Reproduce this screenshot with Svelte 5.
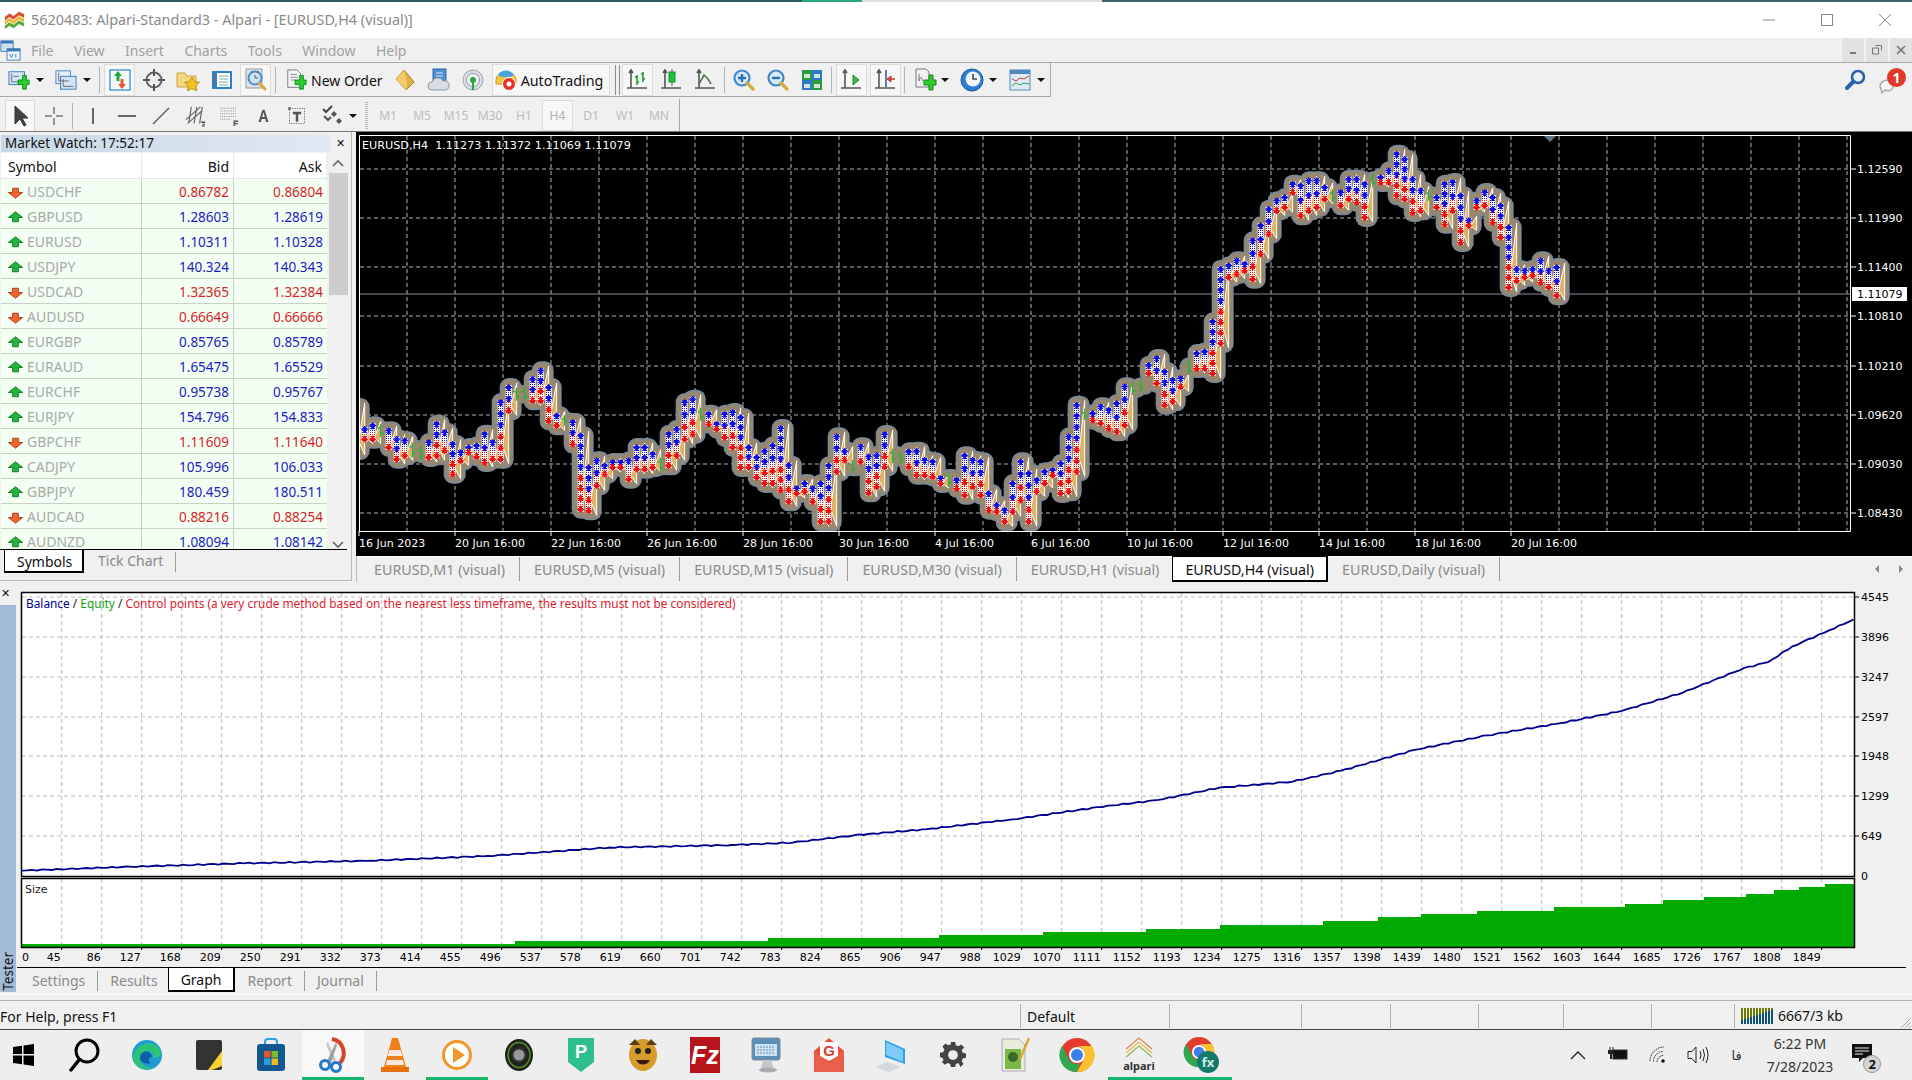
<script>
  // chart traces, read off the reference: [top, bottom] per bar, in crop units
  const seg1 = [[170,215],[160,215],[175,190],[175,240],[200,275],[205,265],[230,250],[240,258],[210,270],[155,265],[180,250],[215,320],[240,280],[225,255],[220,268],[185,285],[210,275],[90,275],[45,130],[65,80],[65,80],[20,100],[-5,100],[45,160],[130,175],[148,155],[150,230],[190,425],[285,430],[265,355],[280,320],[270,300],[270,300],[265,335],[225,305],[225,305],[245,300],[275,295],[185,295],[170,265],[90,215],[80,200],[125,140],[125,170],[155,185],[125,210],[120,240],[135,300],[225,300],[255,330]];
  const seg2 = [[578,690],[562,690],[510,710],[620,745],[690,720],[675,715],[690,745],[675,805],[622,805],[535,655],[578,620],[625,640],[565,625],[595,718],[590,700],[528,640],[590,610],[600,612],[580,640],[578,665],[605,665],[610,670],[660,690],[660,680],[665,705],[592,725],[605,700],[610,725],[705,770],[740,775],[755,805],[675,775],[610,740],[645,805],[665,715],[640,690],[635,665],[615,720],[535,715],[440,655],[470,480],[465,500],[445,510],[455,525],[435,535],[385,515],[390,405],[385,395],[320,360],[300,390],[340,455],[365,445],[360,400],[325,345],[285,345],[280,345],[190,360]];
  const seg3 = [[410,648],[400,450],[385,440],[395,430],[325,455],[280,380],[230,320],[205,250],[195,240],[155,195],[160,265],[145,250],[145,240],[165,215],[190,205],[180,235],[140,215],[140,225],[155,270],[145,160],[135,165],[115,165],[65,205],[80,215],[140,255],[175,250],[190,200],[195,240],[155,290],[150,250],[190,345],[265,295],[205,240],[180,235],[195,285],[220,330],[285,480],[410,460],[415,450],[410,445],[385,465],[415,480],[405,505]];

  const raw = [
    [356.7, 405, 453],
    ...seg1.map((b, i) => [364.67 + 8 * i, 370 + b[0] / 3, 370 + b[1] / 3]),
    ...seg2.map((b, i) => [764.67 + 8 * i, 256 + b[0] / 3, 256 + b[1] / 3]),
    ...seg3.map((b, i) => [1220.67 + 8 * i, 130 + b[0] / 3, 130 + b[1] / 3])
  ];
  const bars = raw.map(([x, t, b]) => {
    const h = b - t;
    const ups = [];
    const downs = [];
    if (h > 8) {
      const n = Math.max(2, Math.round(h / 10));
      for (let k = 0; k < n; k++) {
        const y = t + 3 + (k * (h - 6)) / Math.max(1, n - 1);
        if (k < n * 0.5) ups.push(y);
        else downs.push(y);
      }
    }
    return { x, t, b, h, ups, downs };
  });

  const upArrow = (x, y) => `${x},${y - 4} ${x + 4},${y} ${x + 1.5},${y} ${x + 1.5},${y + 3} ${x - 1.5},${y + 3} ${x - 1.5},${y} ${x - 4},${y}`;
  const downArrow = (x, y) => `${x},${y + 4} ${x + 4},${y} ${x + 1.5},${y} ${x + 1.5},${y - 3} ${x - 1.5},${y - 3} ${x - 1.5},${y} ${x - 4},${y}`;

  const gridX = Array.from({ length: 31 }, (_, i) => 407 + 48 * i);
  const prices = [['1.12590', 169], ['1.11990', 218], ['1.11400', 267], ['1.10810', 316], ['1.10210', 366], ['1.09620', 415], ['1.09030', 464], ['1.08430', 513]];
  const times = [['16 Jun 2023', 359], ['20 Jun 16:00', 455], ['22 Jun 16:00', 551], ['26 Jun 16:00', 647], ['28 Jun 16:00', 743], ['30 Jun 16:00', 839], ['4 Jul 16:00', 935], ['6 Jul 16:00', 1031], ['10 Jul 16:00', 1127], ['12 Jul 16:00', 1223], ['14 Jul 16:00', 1319], ['18 Jul 16:00', 1415], ['20 Jul 16:00', 1511]];

  // tester graph
  const eqPts = [[18,714],[100,711],[200,708],[300,706],[400,702],[500,695],[600,693],[650,691],[700,685],[760,680],[830,672],[900,662],[950,656],[1000,646],[1060,641],[1100,632],[1160,615],[1220,603],[1280,593],[1330,583],[1380,568],[1430,548],[1450,543],[1470,530],[1500,517],[1520,508]];
  let equity = '';
  eqPts.forEach(([x, y], i) => {
    const fx = x * 1.2194;
    const fy = y * 1.2194;
    if (i === 0) {
      equity = `M${fx} ${fy}`;
      return;
    }
    const px = eqPts[i - 1][0] * 1.2194;
    const py = eqPts[i - 1][1] * 1.2194;
    const n = Math.round((fx - px) / 5);
    for (let k = 1; k <= n; k++) {
      const wob = k === n ? 0 : Math.sin(k * 2.3 + i) * 0.6;
      equity += ` L${(px + ((fx - px) * k) / n).toFixed(1)} ${(py + ((fy - py) * k) / n + wob).toFixed(1)}`;
    }
  });
  const steps = [[22,944],[515,941],[768,938],[939,935],[1043,932],[1146,929],[1220,925],[1323,921],[1378,917],[1421,914],[1477,911],[1554,907],[1625,904],[1663,900],[1704,897],[1746,894],[1774,890],[1799,887],[1825,884]];
  let sizeArea = 'M22 947';
  steps.forEach(([x, y], i) => {
    const nx = i + 1 < steps.length ? steps[i + 1][0] : 1854;
    sizeArea += ` L${x} ${y} L${nx} ${y}`;
  });
  sizeArea += ' L1854 947 Z';
  const gxTicks = Array.from({ length: 45 }, (_, i) => 61.7 + 40 * i);
  const gyLabels = [['4545', 597], ['3896', 637], ['3247', 677], ['2597', 717], ['1948', 756], ['1299', 796], ['649', 836]];

  const quotes = [
    ['USDCHF', '0.86782', '0.86804', 0], ['GBPUSD', '1.28603', '1.28619', 1], ['EURUSD', '1.10311', '1.10328', 1],
    ['USDJPY', '140.324', '140.343', 1], ['USDCAD', '1.32365', '1.32384', 0], ['AUDUSD', '0.66649', '0.66666', 0],
    ['EURGBP', '0.85765', '0.85789', 1], ['EURAUD', '1.65475', '1.65529', 1], ['EURCHF', '0.95738', '0.95767', 1],
    ['EURJPY', '154.796', '154.833', 1], ['GBPCHF', '1.11609', '1.11640', 0], ['CADJPY', '105.996', '106.033', 1],
    ['GBPJPY', '180.459', '180.511', 1], ['AUDCAD', '0.88216', '0.88254', 0], ['AUDNZD', '1.08094', '1.08142', 1]
  ];
  const menus = ['File', 'View', 'Insert', 'Charts', 'Tools', 'Window', 'Help'];
  const chartTabs = ['M1', 'M5', 'M15', 'M30', 'H1', 'H4', 'Daily'];
  const timeframes = ['M1', 'M5', 'M15', 'M30', 'H1', 'H4', 'D1', 'W1', 'MN'];

  const plus = '<path d="M12 11h5V6h4v5h3v5h-3v5h-4v-5h-5z" transform="translate(-1 1)" fill="#2ecb2e" stroke="#118a1e"/>';
  const axes = '<path d="M6 2v18M2 20h20M4 5l2-3 2 3" fill="none" stroke="#555" stroke-width="1.6"/>';
  const lens = (c) => `<circle cx="10" cy="10" r="7.5" fill="#d8eaf8" stroke="#3f87c8" stroke-width="2.2"/><path d="M15 15l6 6" stroke="#d8a93a" stroke-width="3.2" stroke-linecap="round"/>${c}`;
  const icons = {
    newchart: `<rect x="1" y="3" width="17" height="14" fill="#d7e7f5" stroke="#3a78b5"/><path d="M4 5v9h11M6 8h6" stroke="#567" fill="none"/>${plus}`,
    profile: '<rect x="1" y="2" width="16" height="14" fill="#e3eef8" stroke="#4a82b8"/><rect x="6" y="8" width="17" height="14" fill="#d2e4f4" stroke="#3a78b5"/><path d="M4 4v9h11M9 11v8h11" stroke="#667" fill="none"/>',
    watch: '<rect x="2" y="2" width="20" height="20" fill="#f3f8fc" stroke="#5a9bd0" stroke-width="1.5"/><path d="M10 3l4 5h-2.5v5h-3V8H6z" fill="#22a83a"/><path d="M14 21l4-5h-2.5v-5h-3v5H10z" fill="#e8582c"/>',
    cross: '<circle cx="12" cy="12" r="7.5" fill="none" stroke="#666" stroke-width="2"/><path d="M12 1v7M12 16v7M1 12h7M16 12h7" stroke="#555" stroke-width="2"/>',
    folder: '<path d="M1 5h8l2 3h9v11H1z" fill="#f4d77a" stroke="#c9a33a"/><path d="M16 9l2.4 4.6 5 .7-3.6 3.5.9 5-4.7-2.4-4.6 2.4.9-5-3.7-3.5 5.1-.7z" fill="#f5c21e" stroke="#b8901a"/>',
    nav: '<rect x="2" y="3" width="20" height="18" rx="1" fill="#2f7fc4"/><rect x="7" y="5" width="13" height="14" fill="#fff"/><path d="M9 8h9M9 11h9M9 14h9M9 17h9" stroke="#7aa"/><path d="M4 7h2M4 11h2M4 15h2" stroke="#e44"/>',
    tester: '<rect x="2" y="1" width="16" height="19" fill="#dde2e8" stroke="#999"/><circle cx="11" cy="10" r="6.5" fill="#cfe2f2" stroke="#4f8fc8" stroke-width="2"/><path d="M7 3l2 2M15 3l-2 2M11 7v3h3" stroke="#567" fill="none"/><path d="M15 15l6 6" stroke="#d8a93a" stroke-width="3" stroke-linecap="round"/>',
    order: `<path d="M3 1h10l4 4v15H3z" fill="#f4f4f4" stroke="#777"/><path d="M6 6h7M6 9h8M6 12h5" stroke="#888"/>${plus}`,
    gold: '<path d="M11 2l10 12-8 8L3 11z" fill="#e0b040" stroke="#a97f25"/><path d="M11 2L3 11l10 11 1-7z" fill="#f0cc6a"/>',
    cloud: '<rect x="6" y="1" width="13" height="15" fill="#4f8fd0" stroke="#2a66a8"/><path d="M9 5h7M9 8h7" stroke="#cfe2f5"/><path d="M5 22a4 4 0 010-8 6 6 0 0111-1 4.5 4.5 0 013 9z" fill="#d8dde2" stroke="#8a98a8"/>',
    signal: '<circle cx="12" cy="12" r="10" fill="#d8dee2" stroke="#9aa4a8"/><circle cx="12" cy="12" r="6.5" fill="#f2f4f4" stroke="#99a"/><circle cx="12" cy="12" r="3" fill="#2da34a"/><path d="M12 14v8" stroke="#2da34a" stroke-width="2"/>',
    auto: '<path d="M2 12a10 8 0 0120 0v4H2z" fill="#f4c93c" stroke="#c69a22"/><path d="M4 7c3-6 12-6 16 0-3 3-13 3-16 0z" fill="#4aa4dc"/><circle cx="15" cy="16" r="6.500" fill="#e5322a" stroke="#fff"/><circle cx="15" cy="16" r="2.500" fill="#fff"/>',
    bars: `${axes}<path d="M12 7v10M12 9h-2M12 14h2M18 4v10M18 6h-2M18 11h2" stroke="#1f9a35" stroke-width="1.6" fill="none"/>`,
    candle: `${axes}<path d="M13 1v17" stroke="#555"/><rect x="10" y="4" width="6" height="10" fill="#1fc43a" stroke="#118a1e"/>`,
    line: `${axes}<path d="M6 16l5-9 4 4 3 5" fill="none" stroke="#4c7a4c" stroke-width="1.6"/>`,
    zin: lens('<path d="M6 10h8M10 6v8" stroke="#2a70b8" stroke-width="2.4"/>'),
    zout: lens('<path d="M6 10h8" stroke="#2a70b8" stroke-width="2.4"/>'),
    tile: '<rect x="2" y="2" width="10" height="10" fill="#2c9a44"/><rect x="12" y="2" width="10" height="10" fill="#2e76c8"/><rect x="2" y="12" width="10" height="10" fill="#2e76c8"/><rect x="12" y="12" width="10" height="10" fill="#2c9a44"/><path d="M4 6h6v4H4zM14 6h6v4h-6zM4 16h6v4H4zM14 16h6v4h-6z" fill="#cfe8d5"/>',
    scroll: `${axes}<path d="M14 7l6 5-6 5z" fill="#38b84a" stroke="#1f8a30"/>`,
    shift: `${axes}<path d="M13 2v17" stroke="#2a60c0" stroke-width="1.6"/><path d="M22 11h-4V8l-4 3 4 3v-3z" fill="#d8442a" stroke="#c03a20"/>`,
    addind: `<path d="M3 1h10l3 3v15H3z" fill="#f2f2f2" stroke="#777"/><path d="M6 6v7q2-7 4 0" stroke="#777" fill="none"/>${plus}`,
    clock: '<circle cx="12" cy="12" r="11" fill="#2c7fd0" stroke="#1a5a9c"/><circle cx="13" cy="11" r="7.5" fill="#eef4fa"/><path d="M13 6v5h4" stroke="#445" stroke-width="1.6" fill="none"/>',
    tpl: '<rect x="2" y="2" width="20" height="20" fill="#dfeaf6" stroke="#5089c0"/><rect x="2" y="2" width="20" height="4" fill="#5089c0"/><path d="M4 11l4 2 4-3 4 1 5-3" stroke="#b8402a" fill="none"/><path d="M4 18l4-3 4 2 4-2 5 1" stroke="#38a04a" fill="none"/>',
    ptr: '<path d="M7 2v18l5-5 4 7 2-1-4-7h6z" fill="#444" stroke="#333"/>',
    thin: '<path d="M12 3v7M12 14v7M3 12h7M14 12h7" stroke="#777" stroke-width="1.5"/>',
    vl: '<path d="M12 4v16" stroke="#666" stroke-width="2"/>',
    hl: '<path d="M3 12h18" stroke="#666" stroke-width="2"/>',
    tl: '<path d="M4 20L20 4" stroke="#666" stroke-width="1.6"/>',
    chan: '<path d="M2 16L18 2M4 20L20 6M8 2l-3 18M14 2l-3 18M20 2l-3 18" stroke="#666" stroke-width="1.3" fill="none"/><path d="M18 18h5v1.500h-3.500v1h3v1.500h-3v1.500h3.500" fill="#444"/>',
    fib: '<path d="M2.500 3.500h17M2.500 6.500h17M2.500 9.500h17M2.500 12.500h17M2.500 15.500h12" stroke="#8a8a8a" stroke-dasharray="1 1"/><path d="M17 23v-6h5v1.500h-3.300v1.200h3v1.400h-3v1.900z" fill="#555"/>',
    txtA: '<path d="M5 21l5.500-17h3L19 21h-3.500l-1-4h-5l-1 4zM10.200 14h3.600L12 7.500z" fill="#555" fill-rule="evenodd"/>',
    txtT: '<rect x="3" y="3" width="18" height="18" fill="none" stroke="#555" stroke-dasharray="1.500 1.500"/><path d="M7 7h10v3h-3.500v9h-3v-9H7z" fill="#555"/><rect x="1.500" y="1.500" width="3" height="3" fill="#555"/>',
    marks: '<path d="M3 5l3 3 6-6" stroke="#444" stroke-width="2" fill="none"/><path d="M11 10l3 3 3-3-3-3zM16 17l3 3 3-3-3-3z" fill="#555"/><path d="M4 12l4 4 3-3" stroke="#555" stroke-width="2" fill="none"/>',
    find: '<circle cx="14" cy="9" r="6" fill="#eaf2fa" stroke="#2b62ad" stroke-width="2.6"/><path d="M9.500 13.500L3 20" stroke="#2b62ad" stroke-width="4" stroke-linecap="round"/>',
    up: '<path d="M12 4l10 8h-6v6H8v-6H2z" fill="#26b33c" stroke="#12822a" stroke-width="1.400"/>',
    down: '<path d="M12 20l10-8h-6V6H8v6H2z" fill="#f0662e" stroke="#b83c1c" stroke-width="1.400"/>',
    logo: '<path d="M1 9l5-4 5 3 6-5 6 3v4l-6-3-6 5-5-3-5 4z" fill="#d94a2e"/><path d="M1 14l5-4 5 3 6-5 6 3v4l-6-3-6 5-5-3-5 4z" fill="#e8b83a"/><path d="M1 19l5-4 5 3 6-5 6 3v4l-6-3-6 5-5-3-5 4z" fill="#5aa83e"/>',
    mdi: '<rect x="1" y="1" width="14" height="12" fill="#cfe0f2" stroke="#3a78b5"/><rect x="8" y="10" width="15" height="13" fill="#eaf3fb" stroke="#3a78b5"/><rect x="1" y="1" width="14" height="3" fill="#3a78b5"/><rect x="8" y="10" width="15" height="3" fill="#3a78b5"/><path d="M11 16l2 4 2-4M18 16v4" stroke="#3a78b5" fill="none"/>'
  };
</script>

{#snippet ic(name, size = 24)}
  <svg class="ic" width={size} height={size} viewBox="0 0 24 24">{@html icons[name]}</svg>
{/snippet}
{#snippet caret()}
  <i class="caret"></i>
{/snippet}

<div class="app">
  <div class="topstrip"><i class="s1"></i><i class="s2"></i><i class="s3"></i><i class="s4"></i></div>
  <header class="titlebar">
    {@render ic('logo', 21)}
    <span class="title">5620483: Alpari-Standard3 - Alpari - [EURUSD,H4 (visual)]</span>
    <div class="winctl">
      <svg width="14" height="14" viewBox="0 0 14 14"><path d="M1 7h12" stroke="#888"/></svg>
      <svg width="14" height="14" viewBox="0 0 14 14"><rect x="1.500" y="1.500" width="11" height="11" fill="none" stroke="#888"/></svg>
      <svg width="14" height="14" viewBox="0 0 14 14"><path d="M1 1l12 12M13 1L1 13" stroke="#888"/></svg>
    </div>
  </header>

  <nav class="menubar">
    {@render ic('mdi', 21)}
    <div class="menus">
      {#each menus as m}<span>{m}</span>{/each}
    </div>
    <div class="mdictl">
      <span><svg width="10" height="10" viewBox="0 0 10 10"><path d="M2 8h6" stroke="#777" stroke-width="2"/></svg></span>
      <span><svg width="10" height="10" viewBox="0 0 10 10"><path d="M3.500 .5h6v5M.5 3h6v6h-6z" fill="none" stroke="#777"/></svg></span>
      <span><svg width="10" height="10" viewBox="0 0 10 10"><path d="M1 1l8 8M9 1L1 9" stroke="#777" stroke-width="1.600"/></svg></span>
    </div>
  </nav>

  <div class="tbrow">
    <div class="tb tb1">
      <div class="dd">{@render ic('newchart', 22)}{@render caret()}</div>
      <div class="dd">{@render ic('profile', 22)}{@render caret()}</div>
      <i class="sep"></i>
      <div class="b active">{@render ic('watch')}</div>
      <div class="b m2">{@render ic('cross')}</div>
      <div class="b">{@render ic('folder')}</div>
      <div class="b">{@render ic('nav')}</div>
      <div class="b active m1">{@render ic('tester')}</div>
      <i class="sep"></i>
      <div class="labelled order">{@render ic('order', 22)}<span>New Order</span></div>
      <div class="b m5">{@render ic('gold')}</div>
      <div class="b">{@render ic('cloud')}</div>
      <div class="b">{@render ic('signal')}</div>
      <div class="labelled autotrade">{@render ic('auto', 24)}<span>AutoTrading</span></div>
      <i class="dblsep"></i>
      <div class="b active">{@render ic('bars')}</div>
      <div class="b m1">{@render ic('candle')}</div>
      <div class="b">{@render ic('line')}</div>
      <i class="sep s2"></i>
      <div class="b">{@render ic('zin')}</div>
      <div class="b">{@render ic('zout')}</div>
      <div class="b">{@render ic('tile')}</div>
      <i class="sep s5"></i>
      <div class="b active">{@render ic('scroll')}</div>
      <div class="b active m3">{@render ic('shift')}</div>
      <i class="sep s3"></i>
      <div class="dd d2">{@render ic('addind')}{@render caret()}</div>
      <div class="dd d3">{@render ic('clock')}{@render caret()}</div>
      <div class="dd d3">{@render ic('tpl')}{@render caret()}</div>
    </div>
    <div class="tbright">
      {@render ic('find')}
      <div class="msg">
        <svg width="24" height="20" viewBox="0 0 24 20"><path d="M3 15c-3-5 2-9 7-9s7 5 4 9c-2 2-5 2-7 1l-3 3z" fill="#f4f4f4" stroke="#aaa" stroke-width="1.500"/></svg>
        <b>1</b>
      </div>
    </div>
  </div>

  <div class="tb2">
    <div class="b active t0">{@render ic('ptr')}</div>
    <div class="b m2">{@render ic('thin')}</div>
    <i class="sep s1"></i>
    <div class="b">{@render ic('vl')}</div>
    <div class="b">{@render ic('hl')}</div>
    <div class="b">{@render ic('tl')}</div>
    <div class="b">{@render ic('chan', 22)}</div>
    <div class="b">{@render ic('fib', 22)}</div>
    <div class="b">{@render ic('txtA', 17)}</div>
    <div class="b">{@render ic('txtT', 20)}</div>
    <div class="dd d4">{@render ic('marks')}{@render caret()}</div>
    <i class="grip"></i>
    {#each timeframes as tf}
      <div class="tf" class:active={tf === 'H4'}>{tf}</div>
    {/each}
    <i class="sep s4"></i>
  </div>

  <div class="upper">
    <aside class="mw">
      <div class="mwhead"><span class="mwtitle">Market Watch: 17:52:17</span><span class="x">✕</span></div>
      <div class="mwbody">
        <div class="mwtable">
          <div class="mwrow th"><span>Symbol</span><span>Bid</span><span>Ask</span></div>
          {#each quotes as q}
            <div class="mwrow">
              <span class="sym">{@render ic(q[3] ? 'up' : 'down', 17)}{q[0]}</span>
              <span class:buy={q[3]} class:sell={!q[3]}>{q[1]}</span>
              <span class:buy={q[3]} class:sell={!q[3]}>{q[2]}</span>
            </div>
          {/each}
        </div>
        <div class="scroll">
          <svg width="12" height="8" viewBox="0 0 12 8"><path d="M1 7l5-5 5 5" fill="none" stroke="#666" stroke-width="1.600"/></svg>
          <div class="track"><i class="thumb"></i></div>
          <svg width="12" height="8" viewBox="0 0 12 8"><path d="M1 1l5 5 5-5" fill="none" stroke="#666" stroke-width="1.600"/></svg>
        </div>
      </div>
      <div class="subtabs">
        <span class="on">Symbols</span><span class="off">Tick Chart</span>
      </div>
    </aside>

    <section class="chartcol">
      <svg class="chart" width="1556" height="424" viewBox="356 132 1556 424" font-family="'DejaVu Sans', sans-serif" font-size="11">
        <defs>
          <pattern id="dotB" width="2" height="2" patternUnits="userSpaceOnUse"><rect width="2" height="2" fill="#fff"/><rect width="1" height="1" fill="#1414d8"/></pattern>
          <pattern id="dotR" width="2" height="2" patternUnits="userSpaceOnUse"><rect width="2" height="2" fill="#fff"/><rect width="1" height="1" fill="#e01414"/></pattern>
          <clipPath id="plot"><rect x="359" y="135" width="1492" height="396"/></clipPath>
        </defs>
        <rect x="356" y="132" width="1556" height="424" fill="#000"/>
        <g stroke="#b4b4b4" stroke-dasharray="4 3">
          {#each gridX as x}<path d="M{x} 136V531"/>{/each}
          {#each prices as p}<path d="M360 {p[1]}H1851"/>{/each}
        </g>
        <path d="M360 294H1851" stroke="#8a8a98"/>
        <g clip-path="url(#plot)">
          {#each bars as b}
            <rect x={b.x - 9} y={b.t - 7} width="22" height={b.h + 14} rx="9" fill="#7c8894"/>
          {/each}
          {#each bars as b}
            <rect x={b.x - 7} y={b.t - 5} width="18" height={b.h + 10} rx="7" fill="#96876e"/>
          {/each}
          {#each bars as b}
            {#if b.h > 8}
              <polygon points="{b.x + 8},{b.t - 2} {b.x + 8},{b.b + 2} {b.x + 2},{(b.t + b.b) / 2 + b.h * 0.25}" fill="#dcb468" stroke="#fff"/>
              <rect x={b.x - 3} y={b.t} width="6" height={b.h * 0.5} fill="url(#dotB)"/>
              <rect x={b.x - 3} y={b.t + b.h * 0.5} width="6" height={b.h * 0.5} fill="url(#dotR)"/>
              {#each b.ups as y}<polygon points={upArrow(b.x, y)} fill="#0c0ce8"/>{/each}
              {#each b.downs as y}<polygon points={downArrow(b.x, y)} fill="#f00c0c"/>{/each}
            {:else}
              <path d="M{b.x} {b.t - 4}V{b.b + 4}M{b.x - 3} {b.t}H{b.x}M{b.x} {b.b}H{b.x + 3}" stroke="#2fae3c" stroke-width="1.500" fill="none"/>
            {/if}
          {/each}
        </g>
        <polygon points="1544,136 1556,136 1550,142" fill="#5f7484"/>
        <path d="M359.500 135.500H1850.500V531.500H359.500Z" fill="none" stroke="#fff"/>
        <text class="ctext" x="362" y="149" fill="#fff">EURUSD,H4  1.11273 1.11372 1.11069 1.11079</text>
        {#each prices as p}
          <path d="M1851 {p[1]}h5" stroke="#fff"/>
          <text x="1857" y={p[1] + 4} fill="#fff">{p[0]}</text>
        {/each}
        {#each times as t}
          <path d="M{t[1]} 531v5" stroke="#fff"/>
          <text x={t[1]} y="547" fill="#fff">{t[0]}</text>
        {/each}
        <rect x="1852" y="287" width="55" height="14" fill="#fff"/>
        <text x="1857" y="298" fill="#000">1.11079</text>
      </svg>
      <div class="chtabs">
        {#each chartTabs as t}
          <span class="chtab" class:on={t === 'H4'}>EURUSD,{t} (visual)</span>
        {/each}
        <span class="nav">
          <svg width="8" height="10" viewBox="0 0 8 10"><path d="M6 1L2 5l4 4z" fill="#888"/></svg>
          <svg width="8" height="10" viewBox="0 0 8 10"><path d="M2 1l4 4-4 4z" fill="#888"/></svg>
        </span>
      </div>
    </section>
  </div>

  <div class="tester">
    <div class="testleft">
      <span class="x">✕</span>
      <div class="testlabel"><span>Tester</span></div>
    </div>
    <div class="testmain">
      <svg class="graph" width="1895" height="379" viewBox="17 588 1895 379" font-family="'DejaVu Sans', sans-serif" font-size="11">
        <rect x="17" y="588" width="1895" height="379" fill="#f0f0f0"/>
        <rect x="21" y="592" width="1834" height="284" fill="#fff"/>
        <rect x="21" y="878" width="1834" height="69" fill="#fff"/>
        <g stroke="#bcbcbc" stroke-dasharray="4 3">
          {#each gxTicks as x}
            <path d="M{x} 593V875M{x} 879V946"/>
          {/each}
          {#each gyLabels as l}<path d="M22 {l[1]}H1854"/>{/each}
        </g>
        <path d={equity} fill="none" stroke="#00008c" stroke-width="1.800"/>
        <path d={sizeArea} fill="#00aa00"/>
        <rect x="21.500" y="592.500" width="1833" height="284" fill="none" stroke="#000" stroke-width="1.500"/>
        <rect x="21.500" y="878.500" width="1833" height="69" fill="none" stroke="#000" stroke-width="1.500"/>
        {#each gyLabels as l}
          <path d="M1855 {l[1]}h4" stroke="#000"/>
          <text x="1861" y={l[1] + 4} fill="#000">{l[0]}</text>
        {/each}
        <text x="1861" y="880" fill="#000">0</text>
        <text x="25" y="893" fill="#222" font-size="11">Size</text>
        <text x="22" y="961" fill="#000">0</text>
        {#each gxTicks as x, i}
          <path d="M{x} 947v3" stroke="#000"/>
          <text x={x - 1} y="961" text-anchor="end" fill="#000">{45 + 41 * i}</text>
        {/each}
      </svg>
      <div class="legend"><span class="l-b">Balance</span> / <span class="l-g">Equity</span> / <span class="l-r">Control points (a very crude method based on the nearest less timeframe, the results must not be considered)</span></div>
      <div class="ttabs">
        <span class="ttab">Settings</span><span class="ttab">Results</span><span class="ttab on">Graph</span><span class="ttab">Report</span><span class="ttab">Journal</span>
      </div>
    </div>
  </div>

  <footer class="status">
    <span class="st c0">For Help, press F1</span>
    <span class="st c1">Default</span>
    <span class="st c2"></span>
    <span class="st c3"></span>
    <span class="st c4"></span>
    <span class="st c4b"></span>
    <span class="st c4c"></span>
    <span class="st c5">
      <svg width="32" height="16" viewBox="0 0 32 16">
        {#each Array.from({ length: 11 }) as _, i}
          <rect x={i * 3} y="0" width="2" height="16" fill="#6c7a0c"/>
          <rect x={i * 3} y={Math.max(2, 12 - i)} width="2" height={16 - Math.max(2, 12 - i)} fill="#0e4f72"/>
        {/each}
      </svg>
      6667/3 kb
    </span>
    <svg class="gripper" width="12" height="12" viewBox="0 0 12 12"><path d="M11 1L1 11M11 5l-6 6M11 9l-2 2" stroke="#aaa"/></svg>
  </footer>

  <div class="taskbar">
    <div class="task first"><svg width="26" height="26" viewBox="0 0 26 26"><path d="M3 5l9-1.300V12H3zM13.500 3.500L24 2v10H13.500zM3 13.500h9v8.800L3 21zM13.500 13.500H24V24l-10.500-1.500z" fill="#000"/></svg></div>
    <div class="task"><svg width="32" height="36" viewBox="0 0 32 36"><circle cx="18" cy="14" r="11" fill="none" stroke="#000" stroke-width="3"/><path d="M10 23L2 33" stroke="#000" stroke-width="3.500" stroke-linecap="round"/></svg></div>
    <div class="task"><svg width="32" height="32" viewBox="0 0 32 32"><circle cx="16" cy="16" r="15" fill="#1f9cd8"/><path d="M2 18C3 5 24-2 30 12c1 5-3 7-8 7 3-6-8-10-12-3-3 6 3 14 12 12-10 6-20-1-20-10z" fill="#2bc27a"/><path d="M9 19c0-8 11-9 12-1-3 0-5 4-1 6-5 2-11-1-11-5z" fill="#0e5fa8"/></svg></div>
    <div class="task"><svg width="28" height="32" viewBox="0 0 28 32"><rect x="1" y="1" width="26" height="30" rx="2" fill="#333"/><path d="M27 12v15l-10 4H13z" fill="#f6d32e"/></svg></div>
    <div class="task"><svg width="30" height="34" viewBox="0 0 30 34"><path d="M9 7V4a3 3 0 013-3h6a3 3 0 013 3v3" fill="none" stroke="#2aa0e0" stroke-width="2"/><rect x="1" y="6" width="28" height="27" rx="3" fill="#13578f"/><rect x="8" y="13" width="6.500" height="6.500" fill="#e9582c"/><rect x="15.500" y="13" width="6.500" height="6.500" fill="#7cbb2e"/><rect x="8" y="20.500" width="6.500" height="6.500" fill="#2aa0e0"/><rect x="15.500" y="20.500" width="6.500" height="6.500" fill="#f5b81e"/></svg></div>
    <div class="task running hover"><svg width="30" height="36" viewBox="0 0 30 36"><path d="M14 2c12 2 15 16 8 24" fill="none" stroke="#d8442a" stroke-width="4"/><path d="M10 5l8 18-3 2-7-18z" fill="#c4c8cc"/><path d="M18 5L9 24l4 2 6-18z" fill="#9aa2a8"/><circle cx="7" cy="28" r="4.500" fill="none" stroke="#1f78c8" stroke-width="3"/><circle cx="18" cy="30" r="4.500" fill="none" stroke="#1f78c8" stroke-width="3"/></svg></div>
    <div class="task"><svg width="30" height="36" viewBox="0 0 30 36"><path d="M12 1h6l8 29H4z" fill="#f08018"/><path d="M9.500 13h11l2 6h-15zM7 23h16l1 5H6z" fill="#f4f4f4" opacity=".9"/><path d="M1 30h28v5H1z" fill="#e87010"/></svg></div>
    <div class="task running"><svg width="32" height="32" viewBox="0 0 32 32"><circle cx="16" cy="16" r="13.500" fill="#fff" stroke="#f0962a" stroke-width="3"/><path d="M12 8l12 8-12 8z" fill="#f0962a"/></svg></div>
    <div class="task"><svg width="32" height="34" viewBox="0 0 32 34"><ellipse cx="16" cy="17" rx="14" ry="16" fill="#1e241c"/><ellipse cx="16" cy="17" rx="11" ry="12.500" fill="none" stroke="#5a8a30" stroke-width="1.500"/><circle cx="16" cy="17" r="6.500" fill="#999" stroke="#333" stroke-width="2"/></svg></div>
    <div class="task"><svg width="30" height="36" viewBox="0 0 30 36"><path d="M2 1h26v24L15 35 2 25z" fill="#2fbf8f"/><text x="15" y="21" font-size="18" font-family="'Liberation Sans', sans-serif" font-weight="700" text-anchor="middle" fill="#fff">P</text></svg></div>
    <div class="task"><svg width="32" height="36" viewBox="0 0 32 36"><ellipse cx="16" cy="18" rx="14" ry="16" fill="#d89a2a"/><path d="M2 8l6-6 5 6zM30 8l-6-6-5 6z" fill="#5a3a14"/><circle cx="11" cy="14" r="3" fill="#222"/><circle cx="21" cy="14" r="3" fill="#222"/><path d="M9 23c3 6 11 6 14 0z" fill="#3a1a0a"/></svg></div>
    <div class="task"><svg width="30" height="36" viewBox="0 0 30 36"><rect x="0" y="0" width="30" height="36" fill="#b8141c"/><text x="15" y="27" font-size="25" font-style="italic" font-weight="700" font-family="'Liberation Sans', sans-serif" text-anchor="middle" fill="#fff">Fz</text></svg></div>
    <div class="task"><svg width="32" height="36" viewBox="0 0 32 36"><rect x="1" y="1" width="28" height="22" rx="2" fill="#5c8fb8" stroke="#889"/><rect x="4" y="7" width="22" height="12" fill="#cfe2f2"/><path d="M6 10h18M6 13h18M6 16h18" stroke="#5c8fb8" stroke-dasharray="2 1"/><path d="M12 23h8l3 9H10z" fill="#c4c8cc"/><ellipse cx="17" cy="33" rx="9" ry="2.500" fill="#a8acb0"/></svg></div>
    <div class="task"><svg width="32" height="36" viewBox="0 0 32 36"><path d="M1 14L16 1l15 13v21H1z" fill="#e8503c"/><path d="M7 5h18v14L16 24 7 19z" fill="#fff"/><text x="16" y="19" font-size="15" font-weight="700" font-family="'Liberation Sans', sans-serif" text-anchor="middle" fill="#d8402c">G</text><path d="M1 14l15 12 15-12v21H1z" fill="#e8604c"/></svg></div>
    <div class="task"><svg width="32" height="36" viewBox="0 0 32 36"><path d="M10 3l20 9v15L10 20z" fill="#2aa0ea"/><path d="M11 5l17 8v12L11 18z" fill="#7ccaf5"/><path d="M0 30l12-5 14 5-12 5z" fill="#d4d8dc"/></svg></div>
    <div class="task"><svg width="26" height="26" viewBox="0 0 24 24"><path d="M10 1h4l.6 3 2.400 1 2.600-1.700 2.800 2.800L20 8.600 21 11l3 .6v4l-3 .6-1 2.400 1.700 2.600-2.800 2.800L17 20.300l-2.400 1L14 24h-4l-.6-2.700-2.400-1-2.600 1.700-2.800-2.800L3.300 18 2.300 15.600 0 15v-4l3-.6 1-2.400L2.300 5.100 5 2.300 7.600 4 10 3z" transform="translate(0 -1)" fill="#444"/><circle cx="12" cy="12" r="4.500" fill="#eee"/></svg></div>
    <div class="task"><svg width="30" height="36" viewBox="0 0 30 36"><path d="M2 2h17l6 6v26H2z" fill="#e8ecd8" stroke="#aab"/><path d="M5 12h16v20H5z" fill="#7cb848"/><circle cx="13" cy="20" r="5" fill="#3a6a2a"/><path d="M20 22L29 1" stroke="#d8a838" stroke-width="2.500"/></svg></div>
    <div class="task"><svg width="36" height="36" viewBox="0 0 36 36"><circle cx="18" cy="18" r="17" fill="#e33b2e"/><path d="M18 35a17 17 0 01-15-26l8 15a8 8 0 0010 2z" fill="#2fa84f"/><path d="M18 35a17 17 0 0015-26H18a9 9 0 017 13z" fill="#fbc02d"/><circle cx="18" cy="18" r="8" fill="#fff"/><circle cx="18" cy="18" r="6" fill="#3f7fe8"/></svg></div>
    <div class="task running"><svg width="34" height="40" viewBox="0 0 34 40"><g fill="none" stroke-width="1.300"><path d="M4 14l6-5 7-6 7 6 6 5" stroke="#e08a5a"/><path d="M4 18l6-5 7-6 7 6 6 5" stroke="#e6c050"/><path d="M4 22l6-5 7-6 7 6 6 5" stroke="#90b860"/></g><text x="17" y="35" font-size="11" font-weight="700" font-family="'Noto Sans', sans-serif" text-anchor="middle" fill="#333">alpari</text></svg></div>
    <div class="task running"><svg width="36" height="38" viewBox="0 0 36 38"><circle cx="16" cy="16" r="15" fill="#e33b2e"/><path d="M16 31A15 15 0 013 8l7 13a7 7 0 009 2z" fill="#2fa84f"/><path d="M16 31A15 15 0 0029 8H16a8 8 0 016 11z" fill="#fbc02d"/><circle cx="16" cy="16" r="7" fill="#fff"/><circle cx="16" cy="16" r="5.300" fill="#3f7fe8"/><circle cx="25" cy="26" r="11" fill="#127a6a"/><text x="25" y="31" font-size="13" font-weight="700" font-family="'Noto Sans', sans-serif" text-anchor="middle" fill="#cfeee4">fx</text></svg></div>
    <div class="tray">
      <svg width="18" height="12" viewBox="0 0 18 12"><path d="M2 10l7-7 7 7" fill="none" stroke="#222" stroke-width="1.300"/></svg>
      <svg width="22" height="16" viewBox="0 0 22 16"><rect x="6" y="3" width="14" height="9" fill="#111" stroke="#333"/><path d="M3 0v3M6 0v3" stroke="#222"/><path d="M1 3h6v4H5v5H3V7H1z" fill="#222"/></svg>
      <svg width="18" height="18" viewBox="0 0 18 18"><path d="M1 15A14 14 0 0115 1M4.500 15.500a10 10 0 0110-10M8 16a6.500 6.500 0 016.500-6.500" fill="none" stroke="#333" stroke-dasharray="1.800 .8"/><circle cx="14" cy="15" r="1.800" fill="#111"/></svg>
      <svg width="22" height="20" viewBox="0 0 22 20"><path d="M1 6.500h4L9 2v16l-4-4.500H1z" fill="none" stroke="#222"/><path d="M13 6q2 4 0 8M16 4q3 6 0 12M19 2q4 8 0 16" fill="none" stroke="#222"/></svg>
      <span class="lang">فا</span>
      <div class="clock"><span>6:22 PM</span><span>7/28/2023</span></div>
      <div class="notif">
        <svg width="22" height="20" viewBox="0 0 22 20"><path d="M1 1h20v14H12l-4 4v-4H1z" fill="#111"/><path d="M4 5h14M4 8h14M4 11h8" stroke="#eee"/></svg>
        <b>2</b>
      </div>
    </div>
  </div>
</div>

<style>
  :global(body) {
    margin: 0;
    background: #f0f0f0;
    overflow: hidden;
  }
  .app {
    position: relative;
    width: 1912px;
    height: 1080px;
    display: flex;
    flex-direction: column;
    font-family: 'Noto Sans', sans-serif;
    font-size: 14px;
    color: #111;
    overflow: hidden;
  }
  .ic {
    flex: none;
    display: block;
  }
  i {
    display: block;
    flex: none;
  }
  .topstrip {
    height: 2px;
    display: flex;
    flex: none;
  }
  .topstrip .s1 { width: 802px; background: #2b5a60; }
  .topstrip .s2 { width: 60px; background: #26a87a; }
  .topstrip .s3 { width: 240px; background: #e0e0e0; }
  .topstrip .s4 { flex: 1; background: #3d6a70; }

  .titlebar {
    height: 36px;
    flex: none;
    background: #fff;
    display: flex;
    align-items: center;
    padding-left: 4px;
    padding-bottom: 1px;
    box-sizing: border-box;
    gap: 6px;
  }
  .title {
    color: #8a8a8a;
    font-size: 14.400px;
  }
  .winctl {
    margin-left: auto;
    display: flex;
    gap: 44px;
    padding-right: 20px;
  }

  .menubar {
    height: 25px;
    flex: none;
    box-sizing: border-box;
    background: #f0f0f0;
    display: flex;
    align-items: center;
    border-bottom: 1px solid #a8a8a8;
  }
  .menus {
    display: flex;
    gap: 20.500px;
    margin-left: 10px;
    color: #a0a0a0;
  }
  .mdictl {
    margin-left: auto;
    display: flex;
    gap: 2px;
    align-self: stretch;
  }
  .mdictl span {
    width: 22px;
    background: #e2e2e2;
    display: flex;
    align-items: center;
    justify-content: center;
  }

  .tbrow {
    height: 34px;
    flex: none;
    display: flex;
    background: #f0f0f0;
  }
  .tb {
    display: flex;
    align-items: center;
  }
  .tb1 {
    width: 1051px;
    box-sizing: border-box;
    padding-left: 1px;
    padding-top: 1px;
    border-bottom: 1px solid #a8a8a8;
    border-right: 1px solid #a8a8a8;
  }
  .tbright {
    margin-left: auto;
    display: flex;
    align-items: center;
    gap: 10px;
    padding-right: 6px;
  }
  .msg {
    position: relative;
    width: 28px;
    height: 28px;
    display: flex;
    align-items: flex-end;
  }
  .msg b {
    position: absolute;
    right: 0;
    top: 2px;
    width: 19px;
    height: 19px;
    border-radius: 50%;
    background: #e0382a;
    color: #fff;
    font-size: 14px;
    line-height: 19px;
    text-align: center;
  }
  .b {
    width: 34px;
    height: 32px;
    flex: none;
    display: flex;
    align-items: center;
    justify-content: center;
    box-sizing: border-box;
  }
  .b.active {
    width: 31px;
    background: #f7f7f7;
    border: 1px solid #dcdcdc;
  }
  .m1 { margin-left: 1px; }
  .m2 { margin-left: 2px; }
  .m3 { margin-left: 3px; }
  .m5 { margin-left: 5px; }
  .dd {
    width: 47px;
    height: 32px;
    flex: none;
    display: flex;
    align-items: center;
    padding-left: 7px;
    box-sizing: border-box;
    gap: 6px;
  }
  .d2 { width: 36px; padding-left: 0; margin-left: 8px; gap: 4px; }
  .d3 { width: 48px; padding-left: 11px; gap: 5px; }
  .d4 { width: 48px; padding-left: 6px; gap: 5px; }
  .caret {
    width: 0;
    height: 0;
    border-left: 4px solid transparent;
    border-right: 4px solid transparent;
    border-top: 4px solid #111;
  }
  .sep {
    width: 1px;
    height: 26px;
    background: #b4b4b4;
    margin: 0 4px;
  }
  .sep.s1 { margin: 0 3px 0 1px; }
  .sep.s2 { margin: 0 2px; }
  .sep.s3 { margin: 0 0 0 3px; }
  .sep.s4 { height: 33px; margin: 0 0 0 3px; background: #a8a8a8; }
  .sep.s5 { margin: 0 4px 0 2px; }
  .dblsep {
    width: 3px;
    height: 30px;
    border-left: 1px solid #888;
    border-right: 1px solid #888;
    margin: 0 2px 0 5px;
  }
  .labelled {
    display: flex;
    align-items: center;
    flex: none;
    height: 32px;
    box-sizing: border-box;
  }
  .order {
    margin-left: 5px;
    gap: 4px;
  }
  .autotrade {
    width: 118px;
    margin-left: 2px;
    padding-left: 1px;
    gap: 3px;
    font-size: 14.300px;
    background: #f7f7f7;
    border: 1px solid #dcdcdc;
  }

  .tb2 {
    height: 34px;
    flex: none;
    display: flex;
    align-items: center;
    background: #f0f0f0;
    padding-left: 5px;
    padding-top: 3px;
    box-sizing: border-box;
  }
  .b.t0 { width: 30px; }
  .grip {
    width: 3px;
    height: 28px;
    margin: 0 3px;
    background: repeating-linear-gradient(#bbb 0 1px, transparent 1px 2px);
  }
  .tf {
    width: 34px;
    height: 31px;
    flex: none;
    display: flex;
    align-items: center;
    justify-content: center;
    box-sizing: border-box;
    font-size: 12px;
    color: #bcbcbc;
  }
  .tf.active {
    width: 31px;
    margin: 0 1px;
    background: #f7f7f7;
    border: 1px solid #dcdcdc;
    color: #b0b0b0;
  }

  .upper {
    height: 451px;
    flex: none;
    display: flex;
    border-top: 1px solid #777;
    box-sizing: border-box;
    background: #f0f0f0;
  }
  .mw {
    width: 352px;
    flex: none;
    display: flex;
    flex-direction: column;
    padding-top: 3px;
    box-sizing: border-box;
    height: 449px;
    border-bottom: 1px solid #b8b8b8;
    border-right: 1px solid #b8b8b8;
  }
  .mwhead {
    height: 17px;
    flex: none;
    display: flex;
    align-items: center;
  }
  .mwtitle {
    flex: none;
    width: 329px;
    margin-left: 1px;
    height: 17px;
    line-height: 17px;
    padding-left: 4px;
    box-sizing: border-box;
    background: linear-gradient(90deg, #c8d8e6, #e0e8f2);
    font-size: 13.500px;
  }
  .x {
    font-family: 'DejaVu Sans', sans-serif;
    font-size: 11px;
    font-weight: 700;
    line-height: 1;
    margin-left: 6px;
  }
  .mwbody {
    height: 396px;
    flex: none;
    margin-top: 1px;
    display: flex;
    overflow: hidden;
  }
  .mwtable {
    width: 326px;
    margin-left: 1px;
    flex: none;
  }
  .mwrow {
    display: grid;
    grid-template-columns: 141px 92px 93px;
    height: 25px;
    line-height: 26px;
    box-sizing: border-box;
    background: #f2fff2;
    border-bottom: 1px solid #c6d2c6;
    font-size: 13.500px;
  }
  .mwrow > span {
    border-right: 1px solid #c6d2c6;
    padding-right: 4px;
    text-align: right;
  }
  .mwrow > span:last-child {
    border-right: 0;
  }
  .mwrow.th {
    height: 26px;
    line-height: 28px;
    background: #fff;
    border-bottom: 1px solid #e4e4e4;
    font-size: 14px;
  }
  .mwrow.th > span {
    border-right: 1px solid #e8e8e8;
  }
  .mwrow.th > span:first-child {
    text-align: left;
    padding-left: 7px;
  }
  .mwrow .sym {
    display: flex;
    align-items: center;
    gap: 3px;
    padding-left: 6px;
    text-align: left;
    color: #aaa;
    font-size: 14px;
  }
  .buy { color: #1c1cc4; }
  .sell { color: #d81e2c; }
  .scroll {
    width: 20px;
    margin-left: 1px;
    flex: none;
    display: flex;
    flex-direction: column;
    align-items: center;
    background: #f0f0f0;
    padding-top: 6px;
    box-sizing: border-box;
    height: 396px;
  }
  .track {
    flex: 1;
    width: 19px;
    margin: 6px 0 5px;
  }
  .thumb {
    height: 122px;
    background: #cdcdcd;
  }
  .subtabs {
    flex: 1;
    display: flex;
    align-items: flex-start;
    border-top: 1px solid #000;
    margin-right: 4px;
    color: #888;
  }
  .subtabs span {
    height: 24px;
    line-height: 23px;
    box-sizing: border-box;
  }
  .subtabs .on {
    width: 80px;
    margin-left: 4px;
    margin-top: -1px;
    padding-left: 12px;
    background: #fff;
    color: #111;
    border: 1px solid #000;
    border-width: 1px 2px 2px 1px;
  }
  .subtabs .off {
    margin-left: 14px;
    margin-top: 2px;
    height: 20px;
    line-height: 18px;
    padding-right: 12px;
    border-right: 1px solid #999;
  }

  .chartcol {
    flex: 1;
    margin-left: 4px;
    min-width: 0;
    display: flex;
    flex-direction: column;
  }
  .chart {
    display: block;
    flex: none;
  }
  .chart .ctext {
    white-space: pre;
    font-size: 11.200px;
  }
  .chtabs {
    flex: 1;
    display: flex;
    align-items: flex-start;
    color: #8a8a8a;
    padding-left: 3px;
    border-top: 1px solid #fff;
    border-left: 1px solid #bbb;
    font-size: 14.300px;
  }
  .chtab {
    height: 24px;
    line-height: 26px;
    padding: 0 14px;
    border-right: 1px solid #999;
    box-sizing: border-box;
  }
  .chtab.on {
    color: #111;
    background: #fff;
    border: 1px solid #000;
    border-width: 1px 2px 2px 1px;
    margin-left: -1px;
    padding: 0 12px;
    height: 26px;
    line-height: 25px;
    margin-top: -1px;
  }
  .chtab:nth-child(5) {
    border-right: 0;
  }
  .nav {
    margin-left: auto;
    display: flex;
    gap: 16px;
    padding: 7px 7px 0 0;
  }

  .tester {
    height: 412px;
    flex: none;
    display: flex;
    background: #f0f0f0;
  }
  .testleft {
    width: 17px;
    flex: none;
    display: flex;
    flex-direction: column;
  }
  .testleft .x {
    margin: 6px 0 0 1px;
    height: 17px;
  }
  .testlabel {
    flex: 1;
    margin-bottom: 2px;
    width: 16px;
    background: #a3bbd6;
    display: flex;
    align-items: flex-end;
    justify-content: center;
    overflow: visible;
  }
  .testlabel span {
    writing-mode: vertical-rl;
    transform: rotate(180deg);
    font-size: 13.500px;
    line-height: 16px;
    color: #111;
    padding-top: 1px;
  }
  .testmain {
    position: relative;
    flex: 1;
    display: flex;
    flex-direction: column;
    padding-top: 6px;
    min-width: 0;
  }
  .graph {
    display: block;
    flex: none;
  }
  .legend {
    position: absolute;
    left: 9px;
    top: 14px;
    font-size: 11.850px;
    line-height: 15px;
    color: #222;
  }
  .l-b { color: #00008c; }
  .l-g { color: #14a014; }
  .l-r { color: #e0202c; }
  .ttabs {
    flex: 1;
    display: flex;
    align-items: flex-start;
    border-top: 1px solid #000;
    color: #8a8a8a;
    margin-right: 6px;
  }
  .ttab {
    height: 20px;
    line-height: 20px;
    margin-top: 3px;
    padding: 0 12px;
    border-right: 1px solid #999;
  }
  .ttab:first-child {
    padding-left: 15px;
  }
  .ttab:nth-child(2) {
    border-right: 0;
    padding-right: 10px;
  }
  .ttab.on {
    height: 25px;
    line-height: 24px;
    margin-top: -1px;
    padding: 0 12px;
    background: #fff;
    color: #111;
    border: 1px solid #000;
    border-width: 1px 2px 2px 1px;
    box-sizing: border-box;
  }

  .status {
    height: 36px;
    flex: none;
    box-sizing: border-box;
    display: flex;
    align-items: flex-end;
    background: #f0f0f0;
    border-top: 1px solid #fff;
    position: relative;
    padding-bottom: 1px;
    border-bottom: 1px solid #3a4a50;
    box-shadow: inset 0 5px 0 #f0f0f0, inset 0 6px 0 #b4b4b4;
  }
  .st {
    height: 24px;
    line-height: 25px;
    box-sizing: border-box;
    border-left: 1px solid #b0b0b0;
    padding-left: 6px;
    font-size: 14px;
  }
  .st.c0 { width: 1020px; border-left: 0; padding-left: 0; }
  .st.c1 { width: 149px; }
  .st.c2 { width: 132px; }
  .st.c3 { width: 89px; }
  .st.c4 { width: 88px; }
  .st.c4b { width: 85px; }
  .st.c4c { width: 171px; }
  .st.c5 {
    width: 178px;
    display: flex;
    align-items: center;
    gap: 5px;
    line-height: 24px;
  }
  .st.c4c {
    background: linear-gradient(#b0b0b0, #b0b0b0) 87px 0 / 1px 100% no-repeat;
  }
  .gripper {
    position: absolute;
    right: 0;
    bottom: 0;
  }

  .taskbar {
    height: 50px;
    flex: none;
    background: #eeeeee;
    display: flex;
    align-items: stretch;
  }
  .task {
    width: 62px;
    flex: none;
    display: flex;
    align-items: center;
    justify-content: center;
    box-sizing: border-box;
  }
  .task.first {
    width: 46px;
    margin-right: 7.500px;
  }
  .task.running {
    border-bottom: 3px solid #16b56e;
    padding-top: 3px;
  }
  .task.hover {
    background: #f8f8f8;
  }
  .tray {
    flex: 1;
    display: flex;
    align-items: center;
    padding-left: 337px;
    gap: 20px;
  }
  .lang {
    font-family: 'DejaVu Sans', sans-serif;
    font-size: 13px;
    color: #333;
    margin-left: 3px;
  }
  .clock {
    display: flex;
    flex-direction: column;
    align-items: center;
    margin-left: 5px;
    gap: 4px;
    font-size: 14px;
    line-height: 19px;
    color: #333;
  }
  .notif {
    position: relative;
    margin-left: -2px;
    width: 30px;
    height: 30px;
    margin-top: 6px;
  }
  .notif b {
    position: absolute;
    right: 0;
    bottom: 0;
    width: 18px;
    height: 18px;
    border-radius: 50%;
    background: #d4d4d4;
    border: 1px solid #999;
    box-sizing: border-box;
    font-size: 13px;
    line-height: 16px;
    text-align: center;
    color: #111;
  }
</style>
